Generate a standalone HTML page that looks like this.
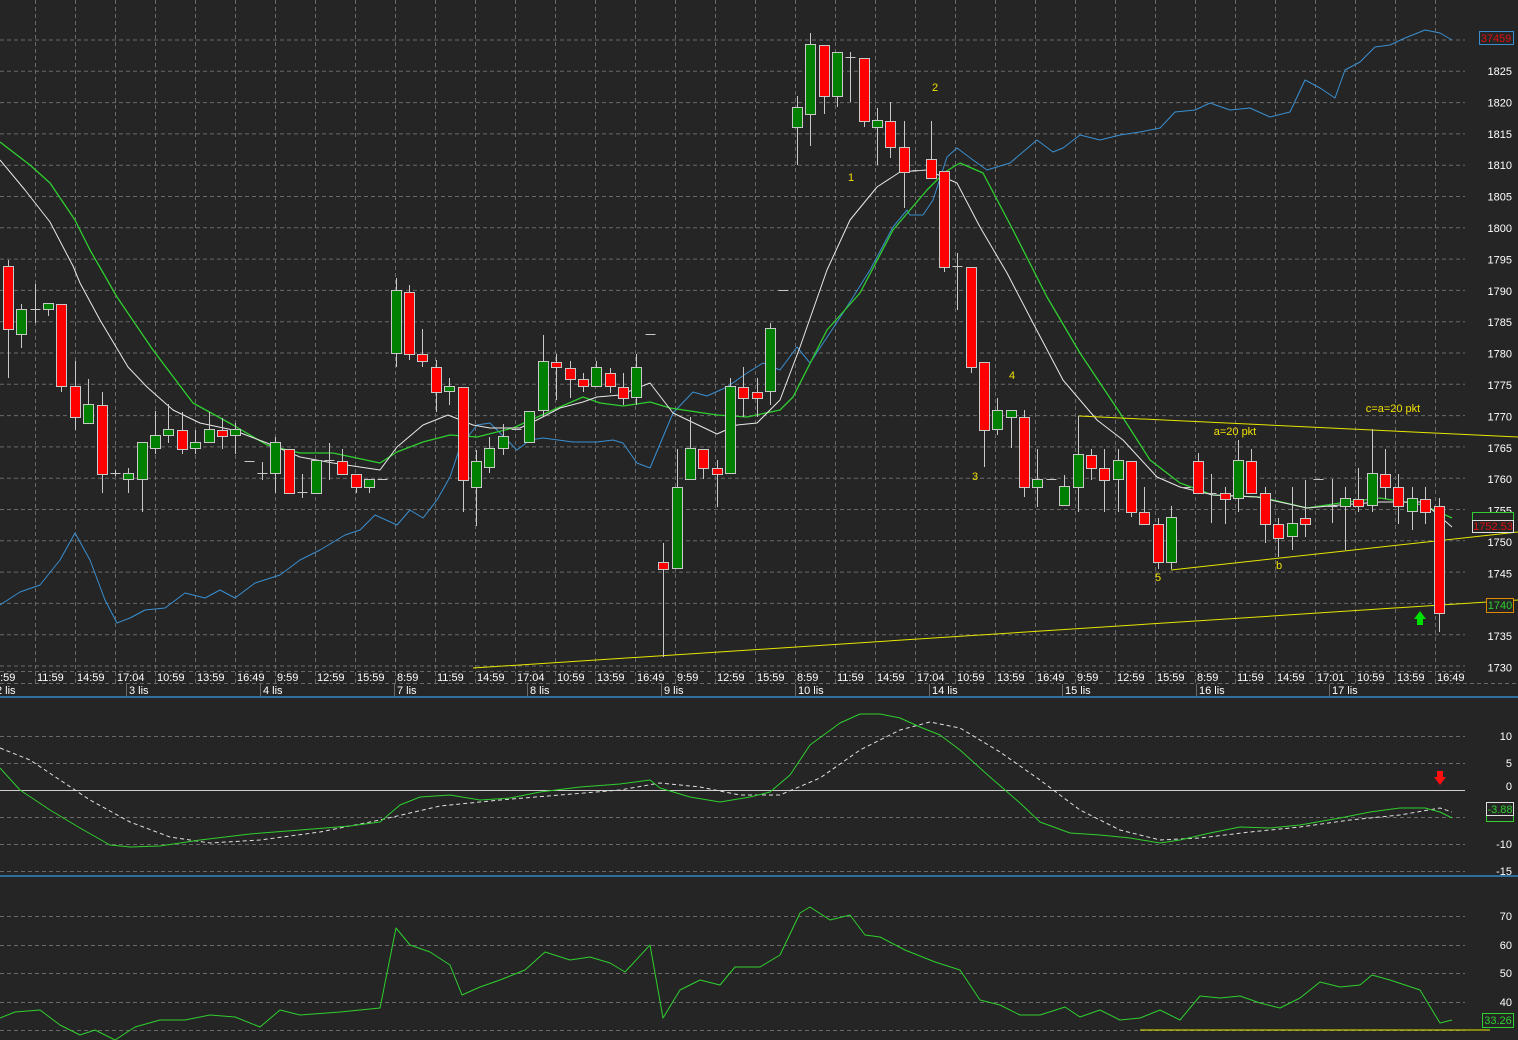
<!DOCTYPE html>
<html><head><meta charset="utf-8"><style>
html,body{margin:0;padding:0;background:#252525;overflow:hidden}
svg{display:block}
text{font-family:"Liberation Sans",sans-serif;font-size:11px}
</style></head><body>
<svg id="s" width="1518" height="1040" xmlns="http://www.w3.org/2000/svg">
<rect width="1518" height="1040" fill="#252525"/>
<g id="grid" stroke="#6a6a6a" stroke-width="1" stroke-dasharray="4,3"></g>
<g id="ax" fill="#ffffff"></g>
<g id="lines" fill="none"></g>
<g id="cd"></g>
<g id="ov"></g>
</svg>
<script>
const NS="http://www.w3.org/2000/svg";
function el(p,t,a,txt){const e=document.createElementNS(NS,t);for(const k in a)e.setAttribute(k,a[k]);if(txt!=null)e.textContent=txt;document.getElementById(p).appendChild(e);return e;}
for(let i=0;i<=20;i++){const y=40+i*31.3;if(y>672)break;el('grid','line',{x1:0,x2:1465,y1:y.toFixed(1),y2:y.toFixed(1)});}
for(let k=0;k<=35;k++){const x=35+40*k+0.5;el('grid','line',{x1:x,x2:x,y1:0,y2:683});}
el('grid','line',{x1:0,x2:1465,y1:671.5,y2:671.5});
el('grid','line',{x1:0,x2:1518,y1:683.5,y2:683.5});
for(let p=1825;p>=1730;p-=5){const y=71+(1825-p)*6.28;el('ax','text',{x:1512,y:(y+4).toFixed(1),'text-anchor':'end'},String(p));}
const tl=["9:59","11:59","14:59","17:04","10:59","13:59","16:49","9:59","12:59","15:59","8:59","11:59","14:59","17:04","10:59","13:59","16:49","9:59","12:59","15:59","8:59","11:59","14:59","17:04","10:59","13:59","16:49","9:59","12:59","15:59","8:59","11:59","14:59","17:01","10:59","13:59","16:49"];
el('ax','text',{x:-6,y:681},tl[0]);
for(let k=0;k<36;k++){el('ax','text',{x:37+40*k,y:681},tl[k+1]);}
const dl=[[0,"2 lis"],[129,"3 lis"],[263,"4 lis"],[397,"7 lis"],[530,"8 lis"],[664,"9 lis"],[798,"10 lis"],[932,"14 lis"],[1065,"15 lis"],[1199,"16 lis"],[1332,"17 lis"]];
dl.forEach(([x,t],i)=>{el('ax','text',{x:i?x:-4,y:694},t);if(i)el('grid','line',{x1:x-2.5,x2:x-2.5,y1:684,y2:696,'stroke-dasharray':'none'});});
el('lines','rect',{x:0,y:696,width:1518,height:2,fill:'#2e6f9e',stroke:'none'});
el('lines','rect',{x:0,y:875,width:1518,height:2,fill:'#2e6f9e',stroke:'none'});
[[736,"10"],[763,"5"],[817,""],[844,"-10"],[871,"-15"]].forEach(([y,t])=>{el('grid','line',{x1:0,x2:1465,y1:y+.5,y2:y+.5});if(t)el('ax','text',{x:1512,y:y+4,'text-anchor':'end'},t);});
el('ax','text',{x:1512,y:790,'text-anchor':'end'},"0");
el('lines','line',{x1:0,x2:1465,y1:790.5,y2:790.5,stroke:'#cfcfcf'});
[[916,"70"],[945,"60"],[973,"50"],[1002,"40"],[1030,""]].forEach(([y,t])=>{el('grid','line',{x1:0,x2:1465,y1:y+.5,y2:y+.5});if(t)el('ax','text',{x:1512,y:y+4,'text-anchor':'end'},t);});
function pl(pts,st,w,da){el('lines','polyline',{points:pts.map(p=>p.join(',')).join(' '),stroke:st,'stroke-width':w||1,'stroke-dasharray':da||'none','stroke-linejoin':'round'});}
pl([[0,605],[20,592],[40,585],[60,560],[75,533],[90,560],[105,600],[117,623],[130,618],[145,610],[165,608],[185,593],[205,598],[220,590],[235,598],[255,583],[280,575],[300,560],[320,550],[345,535],[360,530],[375,515],[397,525],[410,510],[423,518],[437,500],[450,477],[460,447],[477,425],[490,423],[517,450],[530,440],[543,438],[573,442],[597,442],[613,440],[623,443],[637,463],[650,468],[673,413],[693,392],[707,396],[727,387],[747,373],[763,363],[780,370],[797,347],[810,363],[843,313],[870,270],[893,227],[907,210],[910,215],[923,215],[933,200],[947,157],[957,148],[973,160],[987,170],[1010,163],[1037,140],[1053,152],[1063,148],[1080,135],[1100,140],[1120,135],[1140,132],[1160,128],[1175,112],[1195,110],[1210,103],[1230,110],[1250,108],[1270,117],[1290,112],[1305,80],[1320,88],[1335,98],[1345,70],[1360,62],[1375,47],[1390,45],[1405,38],[1425,30],[1440,33],[1452,40]],'#3a8fd0');
pl([[0,142],[30,165],[50,183],[75,220],[90,250],[117,297],[153,350],[193,403],[233,425],[267,445],[300,453],[333,453],[380,463],[397,452],[423,442],[450,435],[477,437],[513,428],[553,410],[583,397],[600,403],[623,406],[650,402],[670,408],[717,415],[747,417],[780,410],[793,397],[827,330],[860,293],[893,230],[927,190],[945,172],[960,163],[983,173],[1013,230],[1047,297],[1080,353],[1098,380],[1120,413],[1150,460],[1180,483],[1213,495],[1260,497],[1307,508],[1340,503],[1380,498],[1423,505],[1452,518]],'#2fcf2f',1.3);
pl([[0,160],[25,190],[50,222],[73,266],[80,283],[100,320],[128,367],[147,387],[173,410],[200,423],[233,430],[267,443],[300,457],[333,463],[380,470],[397,447],[423,425],[448,415],[473,425],[490,428],[520,428],[533,422],[560,408],[583,402],[597,397],[620,395],[650,383],[673,413],[717,434],[737,425],[757,423],[780,400],[800,347],[827,270],[850,220],[877,187],[900,172],[927,170],[957,183],[980,227],[1007,273],[1033,323],[1063,380],[1097,420],[1123,440],[1157,477],[1180,487],[1213,495],[1257,497],[1307,508],[1340,505],[1380,502],[1423,502],[1452,527]],'#e8e8e8');
pl([[473,668],[1518,600]],'#e6e600');
pl([[1079,416],[1518,437]],'#e6e600');
pl([[1171,570],[1518,532]],'#e6e600');
pl([[1140,1030],[1490,1030]],'#e6e600');
pl([[0,748],[30,760],[60,780],[90,800],[130,822],[170,837],[210,843],[260,840],[320,832],[380,820],[440,806],[500,800],[560,795],[620,790],[660,783],[700,787],[740,795],[780,795],[820,778],[860,750],[900,730],[930,722],[960,728],[1000,752],[1040,780],[1080,810],[1120,830],[1160,840],[1200,838],[1250,832],[1300,827],[1350,820],[1400,815],[1440,808],[1452,812]],'#e0e0e0',1,'4,3');
pl([[0,768],[20,790],[50,810],[80,828],[110,845],[130,847],[160,846],[200,840],[250,834],[300,830],[350,826],[380,822],[400,805],[420,797],[450,795],[480,800],[510,798],[540,792],[580,787],[620,784],[650,780],[660,788],[690,797],[720,802],[750,797],[770,792],[790,775],[810,745],[840,723],[860,714],[880,714],[900,718],[920,727],[940,735],[960,750],[990,777],[1020,803],[1040,822],[1070,833],[1100,835],[1130,838],[1160,843],[1180,840],[1210,833],[1240,827],[1270,828],[1300,825],[1340,818],[1370,812],[1400,808],[1425,808],[1440,812],[1452,818]],'#2fcf2f');
pl([[0,1018],[15,1012],[40,1010],[60,1025],[80,1035],[95,1030],[115,1040],[135,1027],[160,1020],[185,1020],[210,1015],[235,1017],[260,1027],[280,1010],[300,1015],[340,1012],[380,1008],[396,928],[410,945],[430,952],[450,965],[462,995],[480,987],[500,980],[525,970],[545,952],[570,960],[590,957],[610,963],[625,972],[650,945],[663,1018],[680,990],[700,980],[720,985],[735,967],[760,967],[780,955],[800,913],[810,907],[830,920],[850,915],[865,935],[880,937],[905,950],[935,962],[960,970],[980,1000],[1000,1005],[1020,1015],[1040,1015],[1065,1007],[1080,1017],[1100,1010],[1120,1020],[1140,1018],[1160,1010],[1180,1020],[1200,996],[1220,998],[1240,996],[1260,1003],[1280,1008],[1300,998],[1320,982],[1340,987],[1360,985],[1372,975],[1390,980],[1405,985],[1420,990],[1440,1023],[1452,1020]],'#2fcf2f');
const C=[
['r',266,329,260,378],['g',309,334,304,348],['d',309,309,284,323],['g',303,309,303,316],['r',304,386,304,392],['r',386,417,361,430],['g',404,423,379,423],['r',405,474,392,493],['d',473,473,470,476],['g',473,479,468,493],
['g',442,479,442,512],['g',435,448,411,454],['g',429,435,404,443],['r',430,449,412,454],['g',442,448,430,454],['g',429,442,412,442],['r',430,436,418,449],['g',429,435,423,454],['d',461,461,461,461],['d',473,473,462,480],
['g',442,473,437,493],['r',449,493,449,493],['d',492,492,474,498],['g',460,493,460,493],['d',460,460,443,480],['r',461,474,449,474],['r',474,487,474,493],['g',479,487,479,493],['d',479,479,479,479],['g',290,353,278,367],
['r',292,354,285,360],['r',354,361,329,367],['r',367,392,360,412],['g',386,391,378,405],['r',387,480,387,512],['g',461,487,450,526],['g',448,467,437,473],['g',436,448,424,455],['d',429,429,429,429],['g',411,442,411,442],
['g',361,410,335,416],['r',362,367,354,400],['r',368,379,361,398],['r',379,386,373,392],['g',367,386,361,386],['r',373,386,368,393],['r',387,398,373,405],['g',367,397,354,405],['d',334,334,334,334],['r',562,569,543,657],
['g',487,568,449,568],['g',448,479,417,479],['r',449,468,449,479],['r',468,474,460,507],['g',386,473,378,473],['r',387,398,367,417],['r',392,398,378,417],['g',328,391,323,405],['d',290,290,290,290],['g',107,127,96,165],
['g',44,114,33,146],['r',45,96,45,114],['g',52,96,52,107],['d',57,57,52,102],['r',58,121,58,127],['g',120,127,108,165],['r',121,147,102,158],['r',147,172,121,208],['d',170,170,170,170],['r',159,178,121,178],
['r',171,267,171,272],['d',266,266,253,310],['r',267,367,267,373],['r',362,430,362,467],['g',410,429,398,435],['g',410,417,410,448],['r',417,487,410,497],['g',479,487,449,507],['d',479,479,479,479],['g',486,505,475,505],
['g',454,487,416,512],['r',455,468,449,480],['r',468,480,449,512],['g',460,479,449,512],['r',461,512,461,517],['r',512,524,487,524],['r',524,562,518,569],['g',517,562,506,569],['d',487,487,487,487],['r',461,493,453,493],
['d',493,493,474,523],['r',493,499,487,524],['g',460,498,440,512],['r',461,493,449,493],['r',493,524,487,543],['r',524,538,518,557],['g',523,536,487,550],['r',518,524,480,537],['d',479,479,479,479],['d',506,506,479,523],
['g',498,506,487,550],['r',499,506,468,512],['g',473,505,429,512],['r',474,487,449,499],['r',487,506,474,524],['g',498,511,487,530],['r',499,512,487,524],['r',506,613,498,632]];
C.forEach((c,i)=>{const x=Math.round(8+13.37*i)+0.5;const[t,a,b,h,l]=c;
 if(h<l)el('cd','line',{x1:x,x2:x,y1:h,y2:l,stroke:'#c8c8c8'});
 if(t==='d'){el('cd','line',{x1:x-5,x2:x+5,y1:a+.5,y2:a+.5,stroke:'#c8c8c8'});}
 else el('cd','rect',{x:x-5,y:a+.5,width:10,height:Math.max(b-a,2),fill:t==='r'?'#ff0000':'#008000',stroke:'#c8c8c8','stroke-width':1});
});
const Y='#f0e000';
[[851,181,"1"],[935,91,"2"],[975,480,"3"],[1012,379,"4"],[1158,581,"5"],[1279,569,"b"],[1235,435,"a=20 pkt"],[1393,412,"c=a=20 pkt"]].forEach(([x,y,t])=>el('ov','text',{x,y,fill:Y,'text-anchor':'middle','font-size':'10.5px'},t));
el('ov','rect',{x:1479.5,y:31.5,width:34,height:13,fill:'#252525',stroke:'#3a8fd0'});
el('ov','text',{x:1496,y:42,fill:'#e01010','text-anchor':'middle','font-size':'10px'},"37459");
el('ov','rect',{x:1472.5,y:512.5,width:41,height:9,fill:'#252525',stroke:'#2fcf2f'});
el('ov','rect',{x:1472.5,y:520.5,width:41,height:12,fill:'#252525',stroke:'#e0e0e0'});
el('ov','text',{x:1493,y:530,fill:'#e01010','text-anchor':'middle','font-size':'10px'},"1752.53");
el('ov','rect',{x:1486.5,y:598.5,width:27,height:14,fill:'#252525',stroke:'#e08a00'});
el('ov','text',{x:1500,y:609,fill:'#2fcf2f','text-anchor':'middle','font-size':'10px'},"1740");
el('ov','rect',{x:1486.5,y:811.5,width:27,height:10,fill:'#252525',stroke:'#2fcf2f'});
el('ov','rect',{x:1486.5,y:802.5,width:27,height:13,fill:'#252525',stroke:'#e0e0e0'});
el('ov','text',{x:1500,y:813,fill:'#2fcf2f','text-anchor':'middle','font-size':'10px'},"-3.88");
el('ov','rect',{x:1482.5,y:1013.5,width:31,height:14,fill:'#252525',stroke:'#2fcf2f'});
el('ov','text',{x:1498,y:1024,fill:'#2fcf2f','text-anchor':'middle','font-size':'10px'},"33.26");
el('ov','polygon',{points:'1417,625 1417,619 1414,619 1420,611 1426,619 1423,619 1423,625',fill:'#00e000'});
el('ov','polygon',{points:'1437,771 1437,777 1434,777 1440,785 1446,777 1443,777 1443,771',fill:'#ff1010'});
</script>
</body></html>
